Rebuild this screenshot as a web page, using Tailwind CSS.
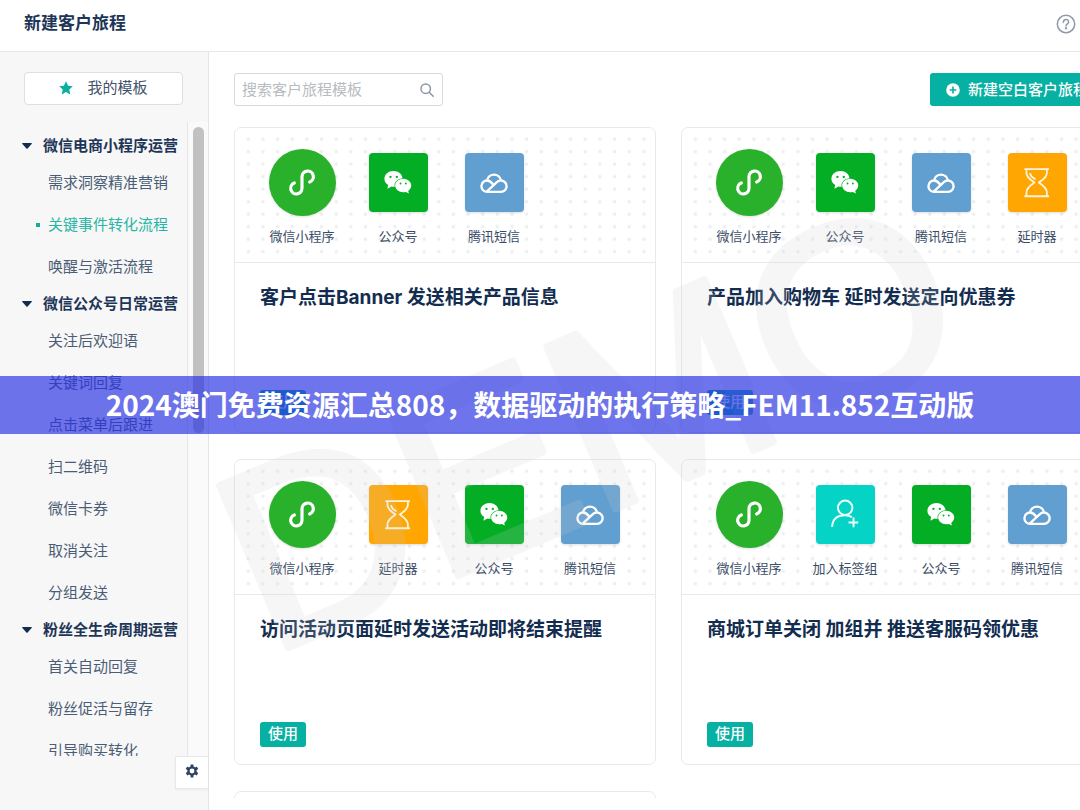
<!DOCTYPE html>
<html lang="zh-CN">
<head>
<meta charset="utf-8">
<meta name="viewport" content="width=device-width, initial-scale=1">
<title>新建客户旅程</title>
<script src="https://cdn.jsdelivr.net/npm/@tailwindcss/browser@4"></script>
</head>
<body class="relative flex h-screen flex-col overflow-hidden bg-white font-['Inter','Noto_Sans_CJK_SC',sans-serif] text-[#1d3557]">

<svg class="absolute size-0" aria-hidden="true">
  <symbol id="mini" viewBox="27 28 201 201"><path d="M149 127A17 17 0 1 0 126 111V146A17 17 0 1 1 103 130" fill="none" stroke="#fff" stroke-width="9.500" stroke-linecap="round"/></symbol>
  <symbol id="wechat" viewBox="327 40 176 176">
    <path d="M400 94c-15 0-27 10-27 23 0 8 4 14 11 18l-2 12 12-7c2 0 4 1 6 1 15 0 27-11 27-24s-12-23-27-23z" fill="#fff"/>
    <path d="M429 117c13 0 24 9 24 20 0 7-4 12-9 16l2 8-9-5c-3 1-5 1-8 1-13 0-24-9-24-20s11-20 24-20z" fill="#fff" stroke="#04ae24" stroke-width="4" paint-order="stroke"/>
    <g fill="#04ae24"><circle cx="391" cy="111" r="3.5"/><circle cx="410" cy="111" r="3.5"/><circle cx="421" cy="131" r="2.8"/><circle cx="437" cy="131" r="2.8"/></g>
  </symbol>
  <symbol id="cloud" viewBox="36 40 176 176"><path d="M102 121A21 21 0 0 1 143 121M120 134C114 126 108 122 102 122A17 17 0 0 0 102 156H143A17 17 0 1 0 131 127L103 153" fill="none" stroke="#fff" stroke-width="7" stroke-linecap="round" stroke-linejoin="round"/></symbol>
  <symbol id="timer" viewBox="325 40 176 176"><path d="M376 88H445M376 169H445M380 88V99C380 114 394 121 404 128C394 135 380 143 380 158V169M441 88V99C441 114 427 121 417 128C427 135 441 143 441 158V169M391 102C393 110 398 114 405 117" fill="none" stroke="#fff5dc" stroke-width="5.500" stroke-linecap="round" stroke-linejoin="round"/></symbol>
  <symbol id="tag" viewBox="48 33 176 176"><g fill="none" stroke="#eafffb" stroke-width="6"><circle cx="135" cy="101" r="21.500"/><path d="M96 158C97 136 110 123 135 123C144 123 150 125 155 129M145 145H174M160 130V159"/></g></symbol>
  <symbol id="caret" viewBox="0 0 10 6"><path d="M.6 0H9.400Q10.200.3 9.600 1L5.600 5.400Q5 6 4.400 5.400L.4 1Q-.2.3.6 0Z" fill="#122c4f"/></symbol>
  <defs>
    <pattern id="dots" x="2" y="1" width="14.650" height="12.500" patternUnits="userSpaceOnUse"><circle cx="7.300" cy="6.200" r="1.800" fill="#edeff2"/></pattern>
  </defs>
</svg>

<header class="flex h-[52px] shrink-0 items-center justify-between border-b border-[#e6e7ea] pr-1 pb-1 pl-6">
  <h1 class="pb-0.5 text-[17px] font-bold leading-6">新建客户旅程</h1>
  <button type="button" aria-label="帮助" class="size-5">
    <svg viewBox="0 0 20 20" class="size-5" fill="none" stroke="#8e99aa" stroke-width="1.500"><circle cx="10" cy="10" r="8.700"/><path d="M7.400 8.200C7.400 4.600 12.600 4.600 12.600 7.900C12.600 9.900 10 9.800 10 12" stroke-linecap="round"/><circle cx="10" cy="14.300" r=".5"/></svg>
  </button>
</header>

<div class="flex min-h-0 flex-1">
  <aside class="flex w-[209px] shrink-0 flex-col border-r border-[#e4e5e8] bg-[#f7f7f7] pt-5">
    <button type="button" class="mr-[25px] ml-6 flex h-[33px] shrink-0 items-center justify-center gap-3.5 rounded-[4px] border border-[#dcdfe5] bg-white pb-px text-[15px] text-[#42536b]">
      <svg viewBox="0 0 14 14" class="size-3.5" fill="#0cae9f"><path d="M7 .3L9.100 4.700L13.800 5.300L10.300 8.600L11.200 13.400L7 11L2.800 13.400L3.700 8.600L.2 5.300L4.900 4.700Z"/></svg>
      我的模板
    </button>
    <div class="mt-[17px] flex min-h-0 flex-1">
      <nav class="min-w-0 flex-1 overflow-hidden border-r border-[#e6e6e8] pt-2 whitespace-nowrap text-[15px] text-[#4b5d76]">
        <h2 class="flex h-8 items-center gap-[11px] pl-[22px] font-bold text-[#1d3557]"><svg class="h-1.5 w-2.5"><use href="#caret"/></svg>微信电商小程序运营</h2>
        <a href="#" class="flex h-[42px] items-center pl-12">需求洞察精准营销</a>
        <a href="#" aria-current="page" class="flex h-[42px] items-center gap-2 pl-9 text-[#27b5a4]"><span class="size-1 bg-[#12ae9c]"></span>关键事件转化流程</a>
        <a href="#" class="flex h-[42px] items-center pl-12">唤醒与激活流程</a>
        <h2 class="flex h-8 items-center gap-[11px] pl-[22px] font-bold text-[#1d3557]"><svg class="h-1.5 w-2.5"><use href="#caret"/></svg>微信公众号日常运营</h2>
        <a href="#" class="flex h-[42px] items-center pl-12">关注后欢迎语</a>
        <a href="#" class="flex h-[42px] items-center pl-12">关键词回复</a>
        <a href="#" class="flex h-[42px] items-center pl-12">点击菜单后跟进</a>
        <a href="#" class="flex h-[42px] items-center pl-12">扫二维码</a>
        <a href="#" class="flex h-[42px] items-center pl-12">微信卡券</a>
        <a href="#" class="flex h-[42px] items-center pl-12">取消关注</a>
        <a href="#" class="flex h-[42px] items-center pl-12">分组发送</a>
        <h2 class="flex h-8 items-center gap-[11px] pl-[22px] font-bold text-[#1d3557]"><svg class="h-1.5 w-2.5"><use href="#caret"/></svg>粉丝全生命周期运营</h2>
        <a href="#" class="flex h-[42px] items-center pl-12">首关自动回复</a>
        <a href="#" class="flex h-[42px] items-center pl-12">粉丝促活与留存</a>
        <a href="#" class="flex h-[42px] items-center pl-12">引导购买转化</a>
      </nav>
      <div class="w-5 shrink-0 bg-[#fafafa] pt-[5px] pl-[5px]"><div class="h-[306px] w-[11px] rounded-full bg-[#c1c1c1]"></div></div>
    </div>
    <button type="button" aria-label="设置" class="mb-[21px] flex h-[33px] w-[33px] shrink-0 items-center justify-center self-end border border-r-0 border-[#e8e9eb] bg-white pb-1 shadow-xs">
      <svg viewBox="0 0 14 14" class="size-3.5" fill="none" stroke="#2b4262"><circle cx="7" cy="7" r="3.600" stroke-width="2.300"/><path d="M7 .6V3M7 11V13.400M1.500 3.800L3.500 5M10.500 9L12.500 10.200M1.500 10.200L3.500 9M10.500 5L12.500 3.800" stroke-width="2.800"/></svg>
    </button>
  </aside>

  <main class="flex min-w-0 flex-1 flex-col overflow-hidden pt-[21px] pb-3 pl-[25px]">
    <div class="flex min-w-[869px] shrink-0 items-center justify-between">
      <label class="flex h-[33px] w-[209px] items-center rounded-[3px] border border-[#d5d9e0] bg-white pr-2 pl-[7px]">
        <input type="search" aria-label="搜索客户旅程模板" placeholder="搜索客户旅程模板" class="min-w-0 flex-1 pt-0.5 text-[15px] outline-none placeholder:text-[#b8bbc0]">
        <svg viewBox="0 0 14 14" class="size-3.5 shrink-0" fill="none" stroke="#8b96a6" stroke-width="1.500" stroke-linecap="round"><circle cx="5.700" cy="5.700" r="4.700"/><path d="M9.200 9.200L13.200 13.200"/></svg>
      </label>
      <button type="button" class="flex h-[33px] w-[173px] items-center gap-2 rounded-[3px] bg-[#06b0a2] pl-4 whitespace-nowrap text-[15px] font-medium text-white">
        <svg viewBox="0 0 14 14" class="size-3.5 shrink-0"><circle cx="7" cy="7" r="6.800" fill="#fff"/><path d="M7 3.600V10.400M3.600 7H10.400" stroke="#06b0a2" stroke-width="1.600"/></svg>
        <span class="pt-0.5">新建空白客户旅程</span>
      </button>
    </div>

    <div class="mt-[21px] grid min-h-0 min-w-[869px] flex-1 auto-rows-[306px] grid-cols-2 gap-x-[25px] gap-y-[26px] overflow-hidden text-[#1d3557]">

      <article class="flex flex-col rounded-[7px] border border-[#e7e9ec] bg-white">
        <div class="relative border-b border-[#e7e9ec]">
          <svg class="absolute inset-x-1 top-1 h-[126px] w-[412px]"><rect width="412" height="126" fill="url(#dots)"/></svg>
          <ul class="relative flex h-[134px] pt-[21px] pl-[19px] text-[13px] leading-5 text-[#3a4c66]">
            <li class="flex w-24 flex-col items-center gap-2.5"><span class="flex h-[67px] items-center"><svg class="size-[67px] rounded-full bg-[#2ab12c] shadow-sm"><use href="#mini"/></svg></span>微信小程序</li>
            <li class="flex w-24 flex-col items-center gap-2.5"><span class="flex h-[67px] items-center"><svg class="size-[59px] rounded bg-[#04ae24] shadow-sm"><use href="#wechat"/></svg></span>公众号</li>
            <li class="flex w-24 flex-col items-center gap-2.5"><span class="flex h-[67px] items-center"><svg class="size-[59px] rounded bg-[#619fd0] shadow-sm"><use href="#cloud"/></svg></span>腾讯短信</li>
          </ul>
        </div>
        <h3 class="px-[25px] pt-[21px] text-[19px] font-bold leading-7 text-[#132d50]">客户点击Banner 发送相关产品信息</h3>
        <button type="button" class="mt-auto mb-[17px] ml-[25px] h-[25px] w-[46px] rounded-[3px] bg-[#06b0a2] pb-0.5 text-[15px] font-medium leading-5 text-white">使用</button>
      </article>

      <article class="flex flex-col rounded-[7px] border border-[#e7e9ec] bg-white">
        <div class="relative border-b border-[#e7e9ec]">
          <svg class="absolute inset-x-1 top-1 h-[126px] w-[412px]"><rect width="412" height="126" fill="url(#dots)"/></svg>
          <ul class="relative flex h-[134px] pt-[21px] pl-[19px] text-[13px] leading-5 text-[#3a4c66]">
            <li class="flex w-24 flex-col items-center gap-2.5"><span class="flex h-[67px] items-center"><svg class="size-[67px] rounded-full bg-[#2ab12c] shadow-sm"><use href="#mini"/></svg></span>微信小程序</li>
            <li class="flex w-24 flex-col items-center gap-2.5"><span class="flex h-[67px] items-center"><svg class="size-[59px] rounded bg-[#04ae24] shadow-sm"><use href="#wechat"/></svg></span>公众号</li>
            <li class="flex w-24 flex-col items-center gap-2.5"><span class="flex h-[67px] items-center"><svg class="size-[59px] rounded bg-[#619fd0] shadow-sm"><use href="#cloud"/></svg></span>腾讯短信</li>
            <li class="flex w-24 flex-col items-center gap-2.5"><span class="flex h-[67px] items-center"><svg class="size-[59px] rounded bg-[#ffa602] shadow-sm"><use href="#timer"/></svg></span>延时器</li>
          </ul>
        </div>
        <h3 class="px-[25px] pt-[21px] text-[19px] font-bold leading-7 text-[#132d50]">产品加入购物车 延时发送定向优惠券</h3>
        <button type="button" class="mt-auto mb-[17px] ml-[25px] h-[25px] w-[46px] rounded-[3px] bg-[#06b0a2] pb-0.5 text-[15px] font-medium leading-5 text-white">使用</button>
      </article>

      <article class="flex flex-col rounded-[7px] border border-[#e7e9ec] bg-white">
        <div class="relative border-b border-[#e7e9ec]">
          <svg class="absolute inset-x-1 top-1 h-[126px] w-[412px]"><rect width="412" height="126" fill="url(#dots)"/></svg>
          <ul class="relative flex h-[134px] pt-[21px] pl-[19px] text-[13px] leading-5 text-[#3a4c66]">
            <li class="flex w-24 flex-col items-center gap-2.5"><span class="flex h-[67px] items-center"><svg class="size-[67px] rounded-full bg-[#2ab12c] shadow-sm"><use href="#mini"/></svg></span>微信小程序</li>
            <li class="flex w-24 flex-col items-center gap-2.5"><span class="flex h-[67px] items-center"><svg class="size-[59px] rounded bg-[#ffa602] shadow-sm"><use href="#timer"/></svg></span>延时器</li>
            <li class="flex w-24 flex-col items-center gap-2.5"><span class="flex h-[67px] items-center"><svg class="size-[59px] rounded bg-[#04ae24] shadow-sm"><use href="#wechat"/></svg></span>公众号</li>
            <li class="flex w-24 flex-col items-center gap-2.5"><span class="flex h-[67px] items-center"><svg class="size-[59px] rounded bg-[#619fd0] shadow-sm"><use href="#cloud"/></svg></span>腾讯短信</li>
          </ul>
        </div>
        <h3 class="px-[25px] pt-[21px] text-[19px] font-bold leading-7 text-[#132d50]">访问活动页面延时发送活动即将结束提醒</h3>
        <button type="button" class="mt-auto mb-[17px] ml-[25px] h-[25px] w-[46px] rounded-[3px] bg-[#06b0a2] pb-0.5 text-[15px] font-medium leading-5 text-white">使用</button>
      </article>

      <article class="flex flex-col rounded-[7px] border border-[#e7e9ec] bg-white">
        <div class="relative border-b border-[#e7e9ec]">
          <svg class="absolute inset-x-1 top-1 h-[126px] w-[412px]"><rect width="412" height="126" fill="url(#dots)"/></svg>
          <ul class="relative flex h-[134px] pt-[21px] pl-[19px] text-[13px] leading-5 text-[#3a4c66]">
            <li class="flex w-24 flex-col items-center gap-2.5"><span class="flex h-[67px] items-center"><svg class="size-[67px] rounded-full bg-[#2ab12c] shadow-sm"><use href="#mini"/></svg></span>微信小程序</li>
            <li class="flex w-24 flex-col items-center gap-2.5"><span class="flex h-[67px] items-center"><svg class="size-[59px] rounded bg-[#04d3c5] shadow-sm"><use href="#tag"/></svg></span>加入标签组</li>
            <li class="flex w-24 flex-col items-center gap-2.5"><span class="flex h-[67px] items-center"><svg class="size-[59px] rounded bg-[#04ae24] shadow-sm"><use href="#wechat"/></svg></span>公众号</li>
            <li class="flex w-24 flex-col items-center gap-2.5"><span class="flex h-[67px] items-center"><svg class="size-[59px] rounded bg-[#619fd0] shadow-sm"><use href="#cloud"/></svg></span>腾讯短信</li>
          </ul>
        </div>
        <h3 class="px-[25px] pt-[21px] text-[19px] font-bold leading-7 text-[#132d50]">商城订单关闭 加组并 推送客服码领优惠</h3>
        <button type="button" class="mt-auto mb-[17px] ml-[25px] h-[25px] w-[46px] rounded-[3px] bg-[#06b0a2] pb-0.5 text-[15px] font-medium leading-5 text-white">使用</button>
      </article>

      <article class="rounded-[7px] border border-[#e7e9ec] bg-white"></article>
    </div>
  </main>
</div>

<!-- Diagonal watermark -->
<svg viewBox="0 0 1080 810" class="pointer-events-none absolute top-0 left-0 w-full opacity-[0.17]" aria-hidden="true">
  <text transform="translate(269 656) rotate(-23)" font-family="Liberation Sans, sans-serif" font-size="256" fill="#d0d0d2" stroke="#d0d0d2" stroke-width="7" stroke-linejoin="round">DEMO</text>
</svg>

<!-- Title banner -->
<div class="absolute inset-x-0 top-[376px] flex h-[58px] items-center justify-center bg-[#2932e1]/68">
  <p class="pb-0.5 font-['Noto_Sans_CJK_SC',sans-serif] text-[28px] font-bold leading-10 whitespace-nowrap text-white">2024澳门免费资源汇总808，数据驱动的执行策略_FEM11.852互动版</p>
</div>
</body>
</html>
